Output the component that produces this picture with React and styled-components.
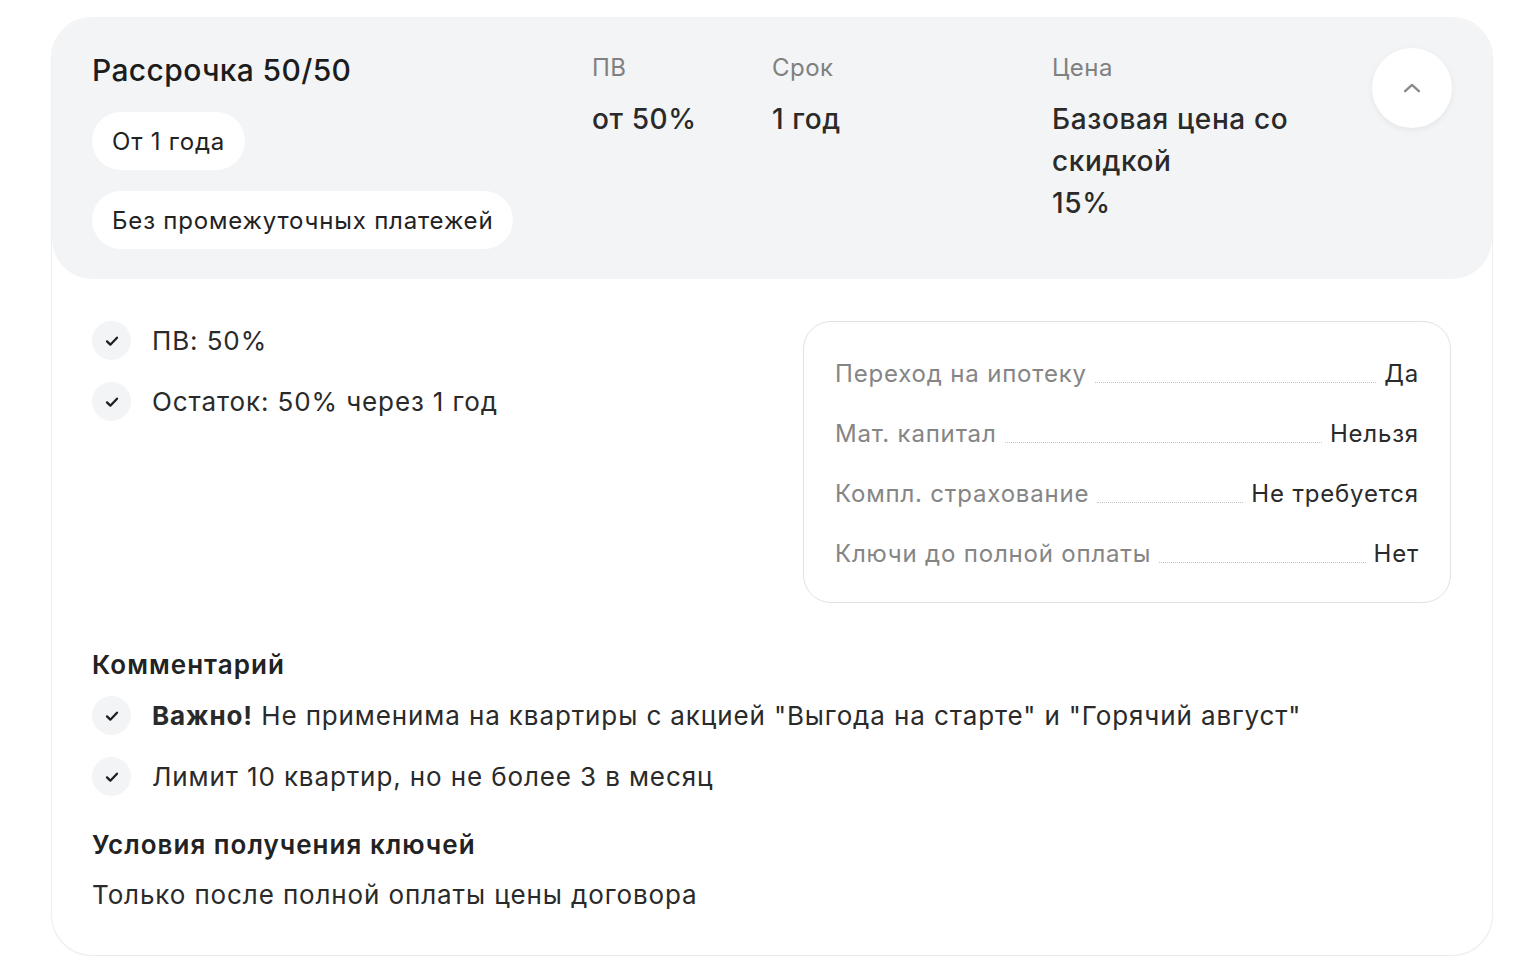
import React from "react";
import styled, { createGlobalStyle } from "styled-components";

const GlobalStyle = createGlobalStyle`
  body {
    margin: 0;
    background: #ffffff;
    font-family: Inter, "Noto Sans", "Liberation Sans", sans-serif;
    letter-spacing: 0.03em;
    color: #222222;
  }
`;

const headerColumns = [
  { label: "ПВ", lines: ["от 50%"] },
  { label: "Срок", lines: ["1 год"] },
  { label: "Цена", lines: ["Базовая цена со скидкой", "15%"] },
];

const terms = [
  { label: "Переход на ипотеку", value: "Да" },
  { label: "Мат. капитал", value: "Нельзя" },
  { label: "Компл. страхование", value: "Не требуется" },
  { label: "Ключи до полной оплаты", value: "Нет" },
];

const CheckIcon = () => (
  <svg width="16" height="16" viewBox="0 0 24 24" fill="none">
    <path
      d="M4.5 12.5l5 5L19.5 7"
      stroke="#1f1f1f"
      strokeWidth="3.4"
      strokeLinecap="round"
      strokeLinejoin="round"
    />
  </svg>
);

const App = () => {
  return (
    <Page>
      <GlobalStyle />
      <Card>
        <Header>
          <TitleBlock>
            <Title>Рассрочка 50/50</Title>
            <Chip>От 1 года</Chip>
            <Chip>Без промежуточных платежей</Chip>
          </TitleBlock>
          {headerColumns.map((col) => (
            <Column key={col.label}>
              <ColLabel>{col.label}</ColLabel>
              <ColValue>
                {col.lines.map((line) => (
                  <span key={line}>{line}</span>
                ))}
              </ColValue>
            </Column>
          ))}
          <ToggleButton aria-label="Свернуть">
            <svg width="30" height="30" viewBox="0 0 24 24" fill="none">
              <path
                d="M6.5 14.5l5.5-5 5.5 5"
                stroke="#8a8a8a"
                strokeWidth="1.9"
                strokeLinecap="round"
                strokeLinejoin="round"
              />
            </svg>
          </ToggleButton>
        </Header>

        <Body>
          <TopRow>
            <CheckList>
              <CheckItem>
                <CheckCircle>
                  <CheckIcon />
                </CheckCircle>
                <span>ПВ: 50%</span>
              </CheckItem>
              <CheckItem>
                <CheckCircle>
                  <CheckIcon />
                </CheckCircle>
                <span>Остаток: 50% через 1 год</span>
              </CheckItem>
            </CheckList>
            <TermsBox>
              {terms.map((t) => (
                <TermRow key={t.label}>
                  <TermLabel>{t.label}</TermLabel>
                  <Leader />
                  <TermValue>{t.value}</TermValue>
                </TermRow>
              ))}
            </TermsBox>
          </TopRow>

          <Section>
            <SectionTitle>Комментарий</SectionTitle>
            <CheckList>
              <CheckItem>
                <CheckCircle>
                  <CheckIcon />
                </CheckCircle>
                <span>
                  <b>Важно!</b> Не применима на квартиры с акцией "Выгода на
                  старте" и "Горячий август"
                </span>
              </CheckItem>
              <CheckItem>
                <CheckCircle>
                  <CheckIcon />
                </CheckCircle>
                <span>Лимит 10 квартир, но не более 3 в месяц</span>
              </CheckItem>
            </CheckList>
          </Section>

          <Section>
            <SectionTitle>Условия получения ключей</SectionTitle>
            <Paragraph>Только после полной оплаты цены договора</Paragraph>
          </Section>
        </Body>
      </Card>
    </Page>
  );
};

const Page = styled.div`
  padding: 18px 39px 20px 52px;
`;

const Card = styled.div`
  width: 1440px;
  background: #fff;
  border-radius: 40px;
  box-shadow: 0 1px 3px rgba(0, 0, 0, 0.05), 0 0 0 1px #f3f3f3;
  overflow: hidden;
`;

const Header = styled.div`
  display: grid;
  grid-template-columns: 500px 180px 280px 1fr 80px;
  align-items: start;
  padding: 30px 40px 30px 40px;
  background: #f3f4f6;
  border-radius: 40px;
`;

const TitleBlock = styled.div`
  display: flex;
  flex-direction: column;
  align-items: flex-start;
  gap: 21px;
`;

const Title = styled.h2`
  margin: 4px 0 3px;
  font-size: 30px;
  line-height: 36px;
  font-weight: 500;
  letter-spacing: 0.012em;
  color: #1c1c1c;
`;

const Chip = styled.span`
  display: inline-flex;
  align-items: center;
  height: 58px;
  padding: 0 20px;
  border-radius: 29px;
  background: #fff;
  font-size: 24px;
  letter-spacing: 0.034em;
  color: #222;
`;

const Column = styled.div`
  display: flex;
  flex-direction: column;
  gap: 14px;
  padding-top: 4px;
  padding-right: 30px;
`;

const ColLabel = styled.span`
  font-size: 24px;
  line-height: 32px;
  color: #808080;
`;

const ColValue = styled.div`
  display: flex;
  flex-direction: column;
  font-size: 28px;
  line-height: 42px;
  font-weight: 500;
  letter-spacing: 0.022em;
  color: #2a2a2a;
  max-width: 250px;
`;

const ToggleButton = styled.button`
  width: 80px;
  height: 80px;
  border-radius: 50%;
  border: none;
  background: #fff;
  box-shadow: 0 2px 6px rgba(0, 0, 0, 0.06);
  display: flex;
  align-items: center;
  justify-content: center;
  padding: 0;
  cursor: pointer;
`;

const Body = styled.div`
  padding: 42px 41px 41px 40px;
  display: flex;
  flex-direction: column;
  gap: 30px;
`;

const TopRow = styled.div`
  display: grid;
  grid-template-columns: 1fr 648px;
  align-items: start;
  margin-bottom: 13px;
`;

const CheckList = styled.div`
  display: flex;
  flex-direction: column;
  gap: 22px;
`;

const CheckItem = styled.div`
  display: flex;
  align-items: center;
  gap: 21px;
  font-size: 26px;
  line-height: 38px;
  letter-spacing: 0.034em;
  color: #2a2a2a;

  b {
    font-weight: 700;
  }
`;

const CheckCircle = styled.span`
  flex: none;
  width: 39px;
  height: 39px;
  border-radius: 50%;
  background: #f3f4f6;
  display: flex;
  align-items: center;
  justify-content: center;
`;

const TermsBox = styled.div`
  border: 1.5px solid #e2e2e2;
  border-radius: 28px;
  padding: 21px 31px 19px 31px;
  display: flex;
  flex-direction: column;
`;

const TermRow = styled.div`
  display: flex;
  align-items: center;
  height: 60px;
  font-size: 24px;
  letter-spacing: 0.034em;
`;

const TermLabel = styled.span`
  color: #858585;
`;

const TermValue = styled.span`
  color: #2a2a2a;
`;

const Leader = styled.span`
  flex: 1;
  align-self: flex-end;
  margin: 0 8px 20px;
  border-bottom: 1.5px dotted #c4c4c4;
`;

const Section = styled.div`
  display: flex;
  flex-direction: column;
  gap: 12px;
`;

const SectionTitle = styled.h3`
  margin: 0;
  font-size: 26px;
  line-height: 38px;
  font-weight: 600;
  letter-spacing: 0.04em;
  color: #222;
`;

const Paragraph = styled.p`
  margin: 0;
  font-size: 26px;
  line-height: 38px;
  letter-spacing: 0.034em;
  color: #2a2a2a;
`;

export default App;
